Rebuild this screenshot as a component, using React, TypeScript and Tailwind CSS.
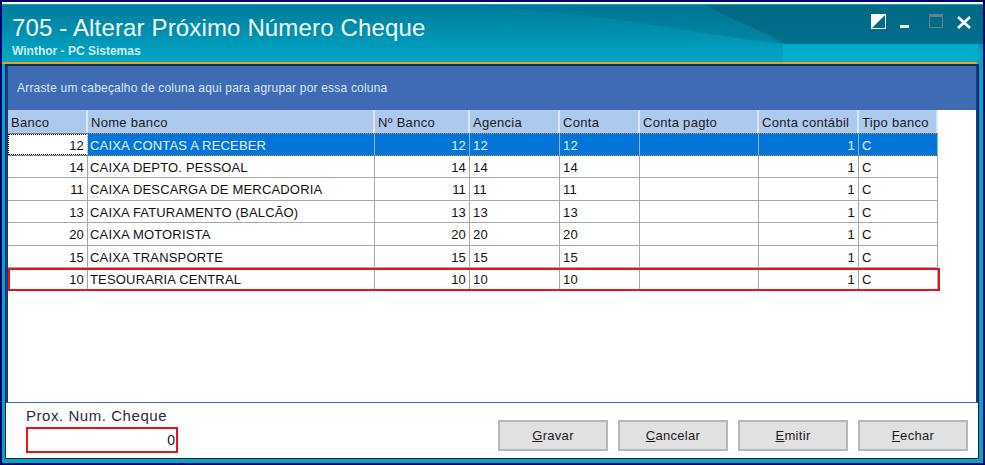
const columns = [
  { label: 'Banco', width: 'w-[80px]' },
  { label: 'Nome banco', width: 'w-[287px]' },
  { label: 'Nº Banco', width: 'w-[95px]' },
  { label: 'Agencia', width: 'w-[90px]' },
  { label: 'Conta', width: 'w-[80px]' },
  { label: 'Conta pagto', width: 'w-[119px]' },
  { label: 'Conta contábil', width: 'w-[100px]' },
  { label: 'Tipo banco', width: 'w-[79px]' },
]

const rows = [
  ['12', 'CAIXA CONTAS A RECEBER'],
  ['14', 'CAIXA DEPTO. PESSOAL'],
  ['11', 'CAIXA DESCARGA DE MERCADORIA'],
  ['13', 'CAIXA FATURAMENTO (BALCÃO)'],
  ['20', 'CAIXA MOTORISTA'],
  ['15', 'CAIXA TRANSPORTE'],
  ['10', 'TESOURARIA CENTRAL'],
]

function Row({ code, name, selected }: { code: string; name: string; selected: boolean }) {
  const cell = `h-full shrink-0 border-r px-[3px] pt-[2px] flex items-center overflow-hidden ${selected ? 'border-r-[#8fb4e0]' : 'border-r-[#a8a8a8]'}`
  return (
    <div
      className={`flex w-[930px] h-[22.5px] shrink-0 ${
        selected
          ? 'bg-[#0275d8] text-[#e8f2ff] border-y border-dotted border-y-[#d98a3a]'
          : 'bg-white text-[#111] border-b border-b-[#a8a8a8]'
      }`}
    >
      <div className={`${cell} w-[80px] justify-end ${selected ? 'bg-white text-[#111] border border-dotted border-black' : ''}`}>{code}</div>
      <div className={`${cell} w-[287px] !pl-[2px]`}>{name}</div>
      <div className={`${cell} w-[95px] justify-end`}>{code}</div>
      <div className={`${cell} w-[90px]`}>{code}</div>
      <div className={`${cell} w-[80px]`}>{code}</div>
      <div className={`${cell} w-[119px]`}></div>
      <div className={`${cell} w-[100px] justify-end`}>1</div>
      <div className={`${cell} w-[79px]`}>C</div>
    </div>
  )
}

function ActionButton({ first, rest }: { first: string; rest: string }) {
  return (
    <button className="w-[110px] h-[31px] bg-[#e1e1e1] border-2 border-[#b8b8b8] text-[13px] tracking-[0.3px] text-[#1a1a1a]">
      <span className="underline">{first}</span>
      {rest}
    </button>
  )
}

export default function App() {
  return (
    <div className="relative w-[985px] h-[465px] bg-[#00006b] p-[2px] font-['Liberation_Sans',sans-serif] overflow-hidden">
      <div className="h-full bg-[#04a5c4] pt-[1px] border-t-2 border-t-white flex flex-col">
        {/* Title bar */}
        <div className="relative h-[59px] shrink-0 bg-gradient-to-b from-[#017c9b] to-[#00a9c8] overflow-hidden">
          <svg className="absolute inset-0" width="981" height="59" viewBox="0 0 981 59">
            <path d="M0 0H981V39H782C700 30 620 10 470 0Z" fill="#016f8d" opacity="0.45" />
            <path d="M703 0C730 15 760 25 782 39H981V0Z" fill="#01607c" opacity="0.6" />
            <path d="M781 39H976V59H781Z" fill="#02aecb" />
          </svg>
          <div className="relative pl-[10px] pt-[9px] pr-[12px] flex justify-between">
            <div>
              <h1 className="text-[24px] leading-[27px] tracking-[0.15px] text-[#f4fafc]">705 - Alterar Próximo Número Cheque</h1>
              <p className="mt-[3px] text-[12px] leading-[14px] font-bold text-[#cfeef2]">Winthor - PC Sistemas</p>
            </div>
            <div className="flex items-start">
              <svg width="15" height="15" viewBox="0 0 15 15">
                <rect width="14" height="14" x="0.5" y="0.5" fill="#056a86" stroke="#fff" />
                <path d="M1 1H14L1 14Z" fill="#fff" />
              </svg>
              <svg width="15" height="15" viewBox="0 0 15 15" className="ml-[11px]">
                <rect x="3" y="11" width="9" height="3" fill="#f2fafc" />
              </svg>
              <svg width="15" height="15" viewBox="0 0 15 15" className="ml-[16px]">
                <rect x="1.5" y="0.5" width="13" height="13" fill="none" stroke="#67808a" />
                <rect x="1" y="0" width="14" height="3" fill="#67808a" />
              </svg>
              <svg width="15" height="15" viewBox="0 0 15 15" className="ml-[13px]">
                <path d="M2 3L14 14M14 3L2 14" stroke="#fff" strokeWidth="2.6" />
              </svg>
            </div>
          </div>
          <div className="absolute left-0 right-[6px] bottom-0 h-[2px] bg-[#eaa21a]" />
        </div>

        {/* Window body */}
        <div className="flex-1 ml-[3px] mr-[4px] mb-[4px] border-t-2 border-t-[#04306a] border-x border-x-[#0a1a40] border-b border-b-[#222] bg-white flex flex-col min-h-0">
          <div className="flex-1 min-h-0 border-2 border-t-0 border-b border-x-[#123a8c] border-b-[#3f6bb5] bg-white flex flex-col text-[13px] tracking-[0.17px]">
            <div className="h-[44px] shrink-0 bg-[#3f6bb5] text-[#dce6f5] text-[12px] tracking-[0.19px] pl-[9px] flex items-center">
              Arraste um cabeçalho de coluna aqui para agrupar por essa coluna
            </div>
            <div className="flex h-[23px] shrink-0">
              {columns.map((col) => (
                <div
                  key={col.label}
                  className={`${col.width} shrink-0 bg-[#aec9ee] border-r-2 border-r-[#dbe7f7] text-[#1a1a1a] pl-[3px] pt-[2px] tracking-[0.3px] flex items-center`}
                >
                  {col.label}
                </div>
              ))}
            </div>
            {rows.map(([code, name], i) => (
              <Row key={code} code={code} name={name} selected={i === 0} />
            ))}
          </div>

          <div className="h-[55px] shrink-0 flex items-end justify-between pl-[20px] pr-[10px] pb-[7px]">
            <div className="-mb-[2px]">
              <p className="text-[15px] leading-[16px] tracking-[0.55px] text-[#2a2a3a] -mt-[2px] mb-[3px]">Prox. Num. Cheque</p>
              <div className="w-[152px] h-[26px] border-2 border-[#e8141c] bg-white text-right text-[14px] leading-[22px] pr-[1px] text-[#1a1a1a]">
                0
              </div>
            </div>
            <div className="flex gap-[10px]">
              <ActionButton first="G" rest="ravar" />
              <ActionButton first="C" rest="ancelar" />
              <ActionButton first="E" rest="mitir" />
              <ActionButton first="F" rest="echar" />
            </div>
          </div>
        </div>
      </div>

      {/* Red highlight over the last row */}
      <div className="absolute left-[8px] top-[268px] w-[932px] h-[23px] border-2 border-[#e8141c]" />
    </div>
  )
}
